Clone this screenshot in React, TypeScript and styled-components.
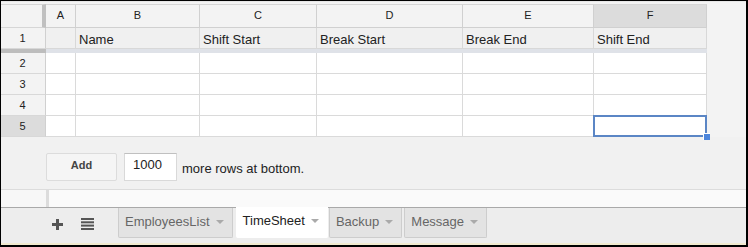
import React from "react";
import styled, {createGlobalStyle} from "styled-components";

const GlobalStyle = createGlobalStyle`
  html, body {
    margin: 0;
    padding: 0;
    background: #000;
  }
  body {
    font-family: Arial, "Liberation Sans", sans-serif;
  }
`

const columns = [
    {letter: "A", width: 30, title: ""},
    {letter: "B", width: 124, title: "Name"},
    {letter: "C", width: 117, title: "Shift Start"},
    {letter: "D", width: 146, title: "Break Start"},
    {letter: "E", width: 131, title: "Break End"},
    {letter: "F", width: 113, title: "Shift End"},
];

const selectedCol = "F";
const selectedRow = 5;
const bodyRows = [2, 3, 4, 5];
const tabs = ["EmployeesList", "TimeSheet", "Backup", "Message"];
const activeTab = "TimeSheet";

const gridTemplate = `45px ${columns.map(c => c.width + "px").join(" ")}`;

const App: React.FC = () => {
    return (
        <>
            <GlobalStyle/>
            <Frame>
                <Sheet>
                    <Grid style={{gridTemplateColumns: gridTemplate}}>
                        <Corner/>
                        {columns.map(c => (
                            <ColHeader key={c.letter} selected={c.letter === selectedCol}>
                                {c.letter}
                            </ColHeader>
                        ))}

                        <RowHeader>1</RowHeader>
                        {columns.map(c => (
                            <TitleCell key={c.letter}>{c.title}</TitleCell>
                        ))}

                        <FreezeHandle/>
                        <FreezeLine/>

                        {bodyRows.map(r => (
                            <React.Fragment key={r}>
                                <RowHeader selected={r === selectedRow}>{r}</RowHeader>
                                {columns.map(c => (
                                    <Cell key={c.letter}>
                                        {r === selectedRow && c.letter === selectedCol && (
                                            <Selection>
                                                <FillHandle/>
                                            </Selection>
                                        )}
                                    </Cell>
                                ))}
                            </React.Fragment>
                        ))}
                    </Grid>

                    <AddRowsBar>
                        <AddButton>Add</AddButton>
                        <RowsInput defaultValue="1000"/>
                        <AddLabel>more rows at bottom.</AddLabel>
                    </AddRowsBar>
                </Sheet>

                <ScrollBand>
                    <ScrollLeft/>
                    <ScrollRight/>
                </ScrollBand>

                <TabBar>
                    <TabTools>
                        <PlusIcon/>
                        <ListIcon/>
                    </TabTools>
                    {tabs.map(t => (
                        <Tab key={t} active={t === activeTab}>
                            {t}
                            <Caret/>
                        </Tab>
                    ))}
                </TabBar>
                <BottomEdge/>
            </Frame>
        </>
    );
}

const PlusIcon = () => (
    <svg width="11" height="11" viewBox="0 0 11 11">
        <rect x="4" y="0" width="3" height="11" fill="#555"/>
        <rect x="0" y="4" width="11" height="3" fill="#555"/>
    </svg>
);

const ListIcon = () => (
    <svg width="13" height="12" viewBox="0 0 13 12">
        <rect x="0" y="0" width="13" height="2" fill="#555"/>
        <rect x="0" y="3.3" width="13" height="2" fill="#555"/>
        <rect x="0" y="6.6" width="13" height="2" fill="#555"/>
        <rect x="0" y="10" width="13" height="2" fill="#555"/>
    </svg>
);

const Frame = styled.div`
  width: 745px;
  height: 244px;
  margin-left: 1px;
  margin-top: 1px;
  background: #f1f1f1;
  display: flex;
  flex-direction: column;
  overflow: hidden;
`

const Sheet = styled.div`
  flex: 0 0 188px;
  padding-top: 2px;
  background: #f3f3f3;
  display: flex;
  flex-direction: column;
  border-top: 1px solid #e6e6e6;
  box-sizing: border-box;
`

const Grid = styled.div`
  display: grid;
  grid-template-rows: 24px 21px 4px 21px 21px 21px 21px;
  width: 706px;
  font-size: 11px;
  color: #222;
`

const Corner = styled.div`
  background: #f3f3f3;
  border-top: 1px solid #d6d6d6;
  border-bottom: 1px solid #d6d6d6;
  border-right: 4px solid #c0c0c0;
  box-sizing: border-box;
`

const ColHeader = styled.div<{ selected?: boolean }>`
  background: ${p => p.selected ? "#dcdcdc" : "#f3f3f3"};
  border-top: 1px solid #d6d6d6;
  border-bottom: 1px solid #d0d0d0;
  border-right: 1px solid #d0d0d0;
  box-sizing: border-box;
  display: flex;
  align-items: center;
  justify-content: center;
  padding-bottom: 2px;
`

const RowHeader = styled.div<{ selected?: boolean }>`
  background: ${p => p.selected ? "#dcdcdc" : "#f3f3f3"};
  border-bottom: 1px solid #d8d8d8;
  border-right: 1px solid #d0d0d0;
  box-sizing: border-box;
  display: flex;
  align-items: center;
  justify-content: center;
  padding-right: 1px;
`

const TitleCell = styled.div`
  background: #f0f0f0;
  border-bottom: 1px solid #d8d8d8;
  border-right: 1px solid #d8d8d8;
  box-sizing: border-box;
  display: flex;
  align-items: center;
  padding: 3px 3px 0;
  font-size: 13px;
  color: #222;
  white-space: nowrap;
  overflow: hidden;
`

const FreezeHandle = styled.div`
  background: #bdbdbd;
`

const FreezeLine = styled.div`
  grid-column: 2 / span 6;
  background: #dfe2e8;
`

const Cell = styled.div`
  position: relative;
  background: #fff;
  border-bottom: 1px solid #dadada;
  border-right: 1px solid #dadada;
  box-sizing: border-box;
`

const Selection = styled.div`
  position: absolute;
  left: -1px;
  top: -1px;
  right: -1px;
  bottom: -1px;
  border: 2px solid #5b86c5;
`

const FillHandle = styled.div`
  position: absolute;
  right: -5px;
  bottom: -5px;
  width: 6px;
  height: 6px;
  background: #4d86dc;
  border: 1px solid #fff;
  border-right: none;
  border-bottom: none;
`

const AddRowsBar = styled.div`
  display: flex;
  align-items: center;
  padding: 7px 0 0 45px;
  background: #f1f1f1;
  flex: 1;
  align-self: stretch;
`

const AddButton = styled.div`
  width: 71px;
  height: 28px;
  box-sizing: border-box;
  border: 1px solid #dcdcdc;
  border-radius: 2px;
  background: #f5f5f5;
  display: flex;
  align-items: center;
  justify-content: center;
  font-size: 11px;
  font-weight: bold;
  color: #444;
  padding-bottom: 3px;
`

const RowsInput = styled.input`
  width: 53px;
  height: 28px;
  box-sizing: border-box;
  margin-left: 7px;
  border: 1px solid #d9d9d9;
  border-top-color: #c0c0c0;
  background: #fff;
  font-family: Arial, "Liberation Sans", sans-serif;
  font-size: 13px;
  color: #222;
  padding: 0 0 4px 8px;
  outline: none;
`

const AddLabel = styled.span`
  margin-left: 5px;
  font-size: 13px;
  color: #222;
  padding-top: 3px;
`

const ScrollBand = styled.div`
  flex: 0 0 17px;
  display: flex;
  border-top: 1px solid #dcdcdc;
  border-bottom: 1px solid #a9a9a9;
  background: #f9f9f9;
`

const ScrollLeft = styled.div`
  width: 45px;
  background: #f7f7f7;
  border-right: 3px solid #dcdcdc;
`

const ScrollRight = styled.div`
  flex: 1;
  background: #fafafa;
`

const TabBar = styled.div`
  flex: 1;
  display: flex;
  align-items: flex-start;
  background: #ededed;
`

const TabTools = styled.div`
  width: 117px;
  height: 32px;
  display: flex;
  align-items: center;
  gap: 18px;
  padding-left: 51px;
  box-sizing: border-box;
`

const Tab = styled.div<{ active?: boolean }>`
  height: ${p => p.active ? 31 : 30}px;
  box-sizing: border-box;
  margin-top: ${p => p.active ? -1 : 0}px;
  margin-right: ${p => p.active ? 1 : 2}px;
  margin-left: ${p => p.active ? 1 : 0}px;
  padding: 0 8px 3px 6px;
  display: flex;
  align-items: center;
  gap: 6px;
  background: ${p => p.active ? "#fff" : "#e3e3e3"};
  border: 1px solid ${p => p.active ? "#fff" : "#cdcdcd"};
  border-top: none;
  border-radius: 0 0 2px 2px;
  font-size: 13px;
  color: ${p => p.active ? "#222" : "#666"};
  white-space: nowrap;
`

const Caret = styled.span`
  width: 0;
  height: 0;
  border-left: 4px solid transparent;
  border-right: 4px solid transparent;
  border-top: 4px solid #aaa;
  margin-top: 1px;
`

const BottomEdge = styled.div`
  flex: 0 0 2px;
  background: #f1ead0;
`

export default App;
